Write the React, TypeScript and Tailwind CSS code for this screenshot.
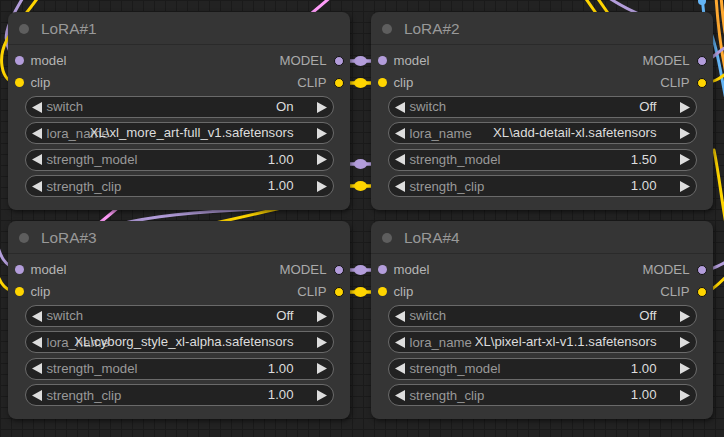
import React from 'react';

type LoraNode = {
  title: string;
  sw: string;
  lora: string;
  sm: string;
  sc: string;
};

const nodes: LoraNode[] = [
  { title: 'LoRA#1', sw: 'On', lora: 'XL\\xl_more_art-full_v1.safetensors', sm: '1.00', sc: '1.00' },
  { title: 'LoRA#2', sw: 'Off', lora: 'XL\\add-detail-xl.safetensors', sm: '1.50', sc: '1.00' },
  { title: 'LoRA#3', sw: 'Off', lora: 'XL\\cyborg_style_xl-alpha.safetensors', sm: '1.00', sc: '1.00' },
  { title: 'LoRA#4', sw: 'Off', lora: 'XL\\pixel-art-xl-v1.1.safetensors', sm: '1.00', sc: '1.00' },
];

function Arrow({ dir }: { dir: 'left' | 'right' }) {
  return (
    <svg width="10" height="11" viewBox="0 0 10 11" className="shrink-0">
      {dir === 'left' ? (
        <polygon points="10,0 10,11 0,5.5" fill="#dddddd" />
      ) : (
        <polygon points="0,0 0,11 10,5.5" fill="#dddddd" />
      )}
    </svg>
  );
}

function Widget({ label, value }: { label: string; value: string }) {
  return (
    <div className="relative mx-[16.5px] flex h-[22px] items-center rounded-full border border-[#6a6a6a] bg-[#222222] pl-[6px] pr-[6px]">
      <Arrow dir="left" />
      <span className="ml-[5px] text-[13.2px] leading-none text-[#999999]">{label}</span>
      <span className="absolute right-[39px] top-1/2 -translate-y-1/2 whitespace-nowrap text-[13.2px] leading-none text-[#dddddd]">
        {value}
      </span>
      <span className="ml-auto">
        <Arrow dir="right" />
      </span>
    </div>
  );
}

function SlotRow({ input, output, color }: { input: string; output: string; color: string }) {
  return (
    <div className="flex h-[22px] items-center justify-between px-[6.5px]">
      <div className="flex items-center gap-[7px]">
        <span className="h-[9px] w-[9px] rounded-full" style={{ background: color }} />
        <span className="text-[13.2px] leading-none text-[#b4b4b4]">{input}</span>
      </div>
      <div className="flex items-center gap-[7px]">
        <span className="text-[13.2px] leading-none text-[#aaaaaa]">{output}</span>
        <span className="h-[10px] w-[10px] rounded-full border border-[#111111]" style={{ background: color }} />
      </div>
    </div>
  );
}

function Node({ n }: { n: LoraNode }) {
  return (
    <div className="flex h-[198px] w-[342px] flex-col rounded-[8px] bg-[#353535] shadow-[1px_2px_5px_rgba(0,0,0,0.55)]">
      <div className="flex h-[33px] shrink-0 items-center gap-[12px] border-b border-[#2a2a2a] pl-[11px] pt-[1px]">
        <span className="h-[10px] w-[10px] rounded-full bg-[#5e5e5e]" />
        <span className="text-[15.4px] leading-none text-[#999999]">{n.title}</span>
      </div>
      <div className="flex flex-col pt-[5px]">
        <SlotRow input="model" output="MODEL" color="#b39ddb" />
        <SlotRow input="clip" output="CLIP" color="#ffd500" />
      </div>
      <div className="mt-[2px] flex flex-col gap-[4.4px]">
        <Widget label="switch" value={n.sw} />
        <Widget label="lora_name" value={n.lora} />
        <Widget label="strength_model" value={n.sm} />
        <Widget label="strength_clip" value={n.sc} />
      </div>
    </div>
  );
}

function Wires() {
  const P = '#b39ddb';
  const Y = '#ffd500';
  const links: [number, string][] = [
    [61, P],
    [83, Y],
    [164, P],
    [186, Y],
    [270, P],
    [292, Y],
  ];
  return (
    <svg className="absolute inset-0" width="724" height="437" viewBox="0 0 724 437" fill="none" strokeLinecap="round">
      {/* left side feeds */}
      <path d="M24 -4 C8 22, -4 44, 19 61" stroke={P} strokeWidth="3" />
      <path d="M39 -4 C20 24, -2 40, 2 66 C4 79, 10 83, 19 83" stroke={Y} strokeWidth="3" />
      <path d="M-4 240 C0 256, 4 266, 19 270" stroke={P} strokeWidth="3" />
      <path d="M-4 270 C0 284, 6 292, 19 292" stroke={Y} strokeWidth="3" />
      {/* top */}
      <path d="M306 18 L332 -4" stroke="#ff9cf9" strokeWidth="3" />
      <path d="M584 -4 L598 16" stroke={Y} strokeWidth="3" />
      <path d="M596 -4 L610 16" stroke={Y} strokeWidth="3" />
      <path d="M606 -4 C618 4, 628 10, 644 16" stroke={P} strokeWidth="3" />
      <path d="M702 -4 L704 16" stroke="#64b5f6" strokeWidth="3" />
      <circle cx="702" cy="1" r="4" fill="#64b5f6" />
      {/* gap between rows */}
      <path d="M96 226 L120 206" stroke="#ff9cf9" strokeWidth="3" />
      <path d="M120 224 C160 214, 220 210, 280 208" stroke={P} strokeWidth="3" />
      <path d="M210 224 C240 218, 262 212, 290 206" stroke={Y} strokeWidth="3" />
      {/* right edge */}
      <path d="M716 -4 C718 30, 722 60, 730 90" stroke="#ffa931" strokeWidth="3" />
      <path d="M721 -4 C723 20, 725 40, 730 50" stroke="#ffa931" strokeWidth="3" />
      <path d="M710 30 C718 50, 720 70, 726 100" stroke="#64b5f6" strokeWidth="3" />
      <path d="M702 61 C712 61, 716 52, 728 46" stroke={P} strokeWidth="3" />
      <path d="M702 83 C712 83, 718 80, 728 72" stroke={Y} strokeWidth="3" />
      <path d="M714 150 C720 180, 722 205, 728 235" stroke={Y} strokeWidth="3" />
      <path d="M702 270 C712 270, 718 266, 728 261" stroke={P} strokeWidth="3" />
      <path d="M702 292 C712 292, 718 284, 728 275" stroke={Y} strokeWidth="3" />
      {/* links between columns */}
      {links.map(([y, c]) => (
        <g key={y}>
          <line x1="339" y1={y} x2="382" y2={y} stroke={c} strokeWidth="3.5" />
          <ellipse cx="360.5" cy={y} rx="6.5" ry="5" fill={c} />
        </g>
      ))}
    </svg>
  );
}

export default function App() {
  return (
    <div
      className="relative h-[437px] w-[724px] overflow-hidden bg-[#222222] bg-[linear-gradient(#1a1a1a_1px,transparent_1px),linear-gradient(90deg,#1a1a1a_1px,transparent_1px)] bg-[size:11px_11px]"
      style={{ fontFamily: '"Liberation Sans", Arial, sans-serif' }}
    >
      <Wires />
      <div className="relative grid grid-cols-[342px_342px] gap-x-[21px] gap-y-[11px] pl-[8px] pt-[12px]">
        {nodes.map((n) => (
          <Node key={n.title} n={n} />
        ))}
      </div>
    </div>
  );
}
